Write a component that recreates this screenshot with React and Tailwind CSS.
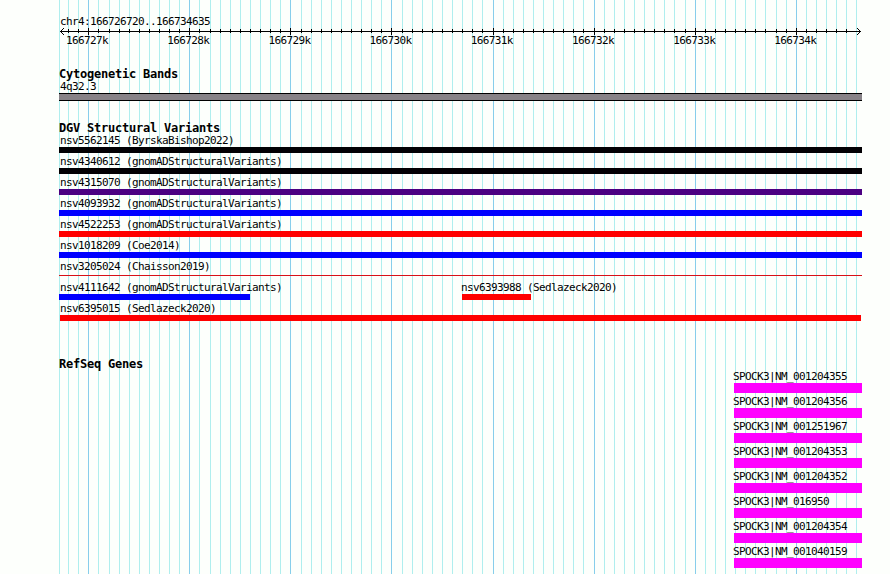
import React from 'react';

// offsets where the rounded 100bp step takes 11px instead of 10px
const wideSteps = [2, 12, 21, 31, 40, 50, 59, 68];

const ticks = Array.from({ length: 79 }, (_, i) => {
    const k = i - 2;
    return { x: 88 + k * 10 + wideSteps.filter(s => s <= k).length, major: k % 10 === 0 };
});

const scaleLabels = ['166727k', '166728k', '166729k', '166730k', '166731k', '166732k', '166733k', '166734k'];

const variants = [
    [{ name: 'nsv5562145 (ByrskaBishop2022)', bar: 'ml-[59px] w-[803px] h-1.5 bg-[#020003]' }],
    [{ name: 'nsv4340612 (gnomADStructuralVariants)', bar: 'ml-[59px] w-[803px] h-1.5 bg-[#020003]' }],
    [{ name: 'nsv4315070 (gnomADStructuralVariants)', bar: 'ml-[59px] w-[803px] h-1.5 bg-[#4b0082]' }],
    [{ name: 'nsv4093932 (gnomADStructuralVariants)', bar: 'ml-[59px] w-[803px] h-1.5 bg-[#0000ff]' }],
    [{ name: 'nsv4522253 (gnomADStructuralVariants)', bar: 'ml-[59px] w-[803px] h-1.5 bg-[#ff0000]' }],
    [{ name: 'nsv1018209 (Coe2014)', bar: 'ml-[59px] w-[803px] h-1.5 bg-[#0000ff]' }],
    [{ name: 'nsv3205024 (Chaisson2019)', bar: 'ml-[59px] mt-[2px] w-[803px] h-px bg-[#d81018]' }],
    [
        { name: 'nsv4111642 (gnomADStructuralVariants)', bar: 'ml-[59px] w-[191px] h-1.5 bg-[#0000ff]' },
        { name: 'nsv6393988 (Sedlazeck2020)', bar: 'w-[69px] h-1.5 bg-[#ff0000]' },
    ],
    [{ name: 'nsv6395015 (Sedlazeck2020)', bar: 'ml-[60px] w-[801px] h-1.5 bg-[#ff0000]' }],
];

const genes = [
    'SPOCK3|NM_001204355',
    'SPOCK3|NM_001204356',
    'SPOCK3|NM_001251967',
    'SPOCK3|NM_001204353',
    'SPOCK3|NM_001204352',
    'SPOCK3|NM_016950',
    'SPOCK3|NM_001204354',
    'SPOCK3|NM_001040159',
];

const TrackTitle = ({ children }) => (
    <h2 className="pl-[59px] h-3 leading-3 text-[12px] tracking-[-0.224px] font-bold whitespace-pre">{children}</h2>
);

const GridLines = () => (
    <svg className="absolute inset-0" width="890" height="574" shapeRendering="crispEdges">
        <rect x="59" y="0" width="1" height="574" fill="#afeeee" />
        {ticks.map(t => (
            <rect key={t.x} x={t.x} y="0" width="1" height="574" fill={t.major ? '#87ceeb' : '#afeeee'} />
        ))}
    </svg>
);

const Ruler = () => (
    <svg className="block" width="890" height="9" shapeRendering="crispEdges">
        <rect x="60" y="4" width="801" height="1" />
        {[1, 2, 3].map(d => (
            <g key={d}>
                <rect x={60 + d} y={4 - d} width="1" height="1" />
                <rect x={60 + d} y={4 + d} width="1" height="1" />
                <rect x={860 - d} y={4 - d} width="1" height="1" />
                <rect x={860 - d} y={4 + d} width="1" height="1" />
            </g>
        ))}
        {ticks.filter(t => t.x < 850).map(t => (
            <rect key={t.x} x={t.x} y={t.major ? 1 : 2} width="1" height={t.major ? 7 : 4} />
        ))}
    </svg>
);

const App = () => {
    return (
        <div className="relative w-[890px] h-[574px] overflow-hidden bg-[#fdfffc] text-black text-[11px] leading-3 tracking-[-0.622px] font-['DejaVu_Sans_Mono',monospace]">
            <GridLines />
            <div className="relative">
                <div className="pt-[15px]">
                    <div className="h-3 leading-[14px] pl-[60px] whitespace-pre">chr4:166726720..166734635</div>
                    <Ruler />
                    <div className="flex pl-[66px] -mt-px h-3">
                        {scaleLabels.map(l => <span key={l} className="w-[101.2px] shrink-0">{l}</span>)}
                    </div>
                </div>

                <div className="pt-[21px]">
                    <TrackTitle>Cytogenetic Bands</TrackTitle>
                    <div className="mt-px h-3 pl-[60px]">4q32.3</div>
                    <div className="ml-[59px] w-[803px] h-2 border-y border-black bg-[#878287]" />
                </div>

                <div className="pt-[21px]">
                    <TrackTitle>DGV Structural Variants</TrackTitle>
                    {variants.map((row, i) => (
                        <div key={i} className="flex h-[21px]">
                            {row.map(v => (
                                <div key={v.name} className="w-[402px] first:w-[462px] shrink-0 group">
                                    <div className="h-[13px] leading-[14px] pl-[60px] group-[:not(:first-child)]:pl-0 group-[:not(:first-child)]:-ml-px whitespace-pre">{v.name}</div>
                                    <div className={v.bar} />
                                </div>
                            ))}
                        </div>
                    ))}
                </div>

                <div className="pt-[35px]">
                    <TrackTitle>RefSeq Genes</TrackTitle>
                    {genes.map(g => (
                        <div key={g} className="ml-[734px] w-32 h-[25px]">
                            <div className="h-[13px] leading-[14px] -ml-px whitespace-pre">{g}</div>
                            <div className="h-2.5 bg-[#ff00ff]" />
                        </div>
                    ))}
                </div>
            </div>
        </div>
    );
};

export default App;
